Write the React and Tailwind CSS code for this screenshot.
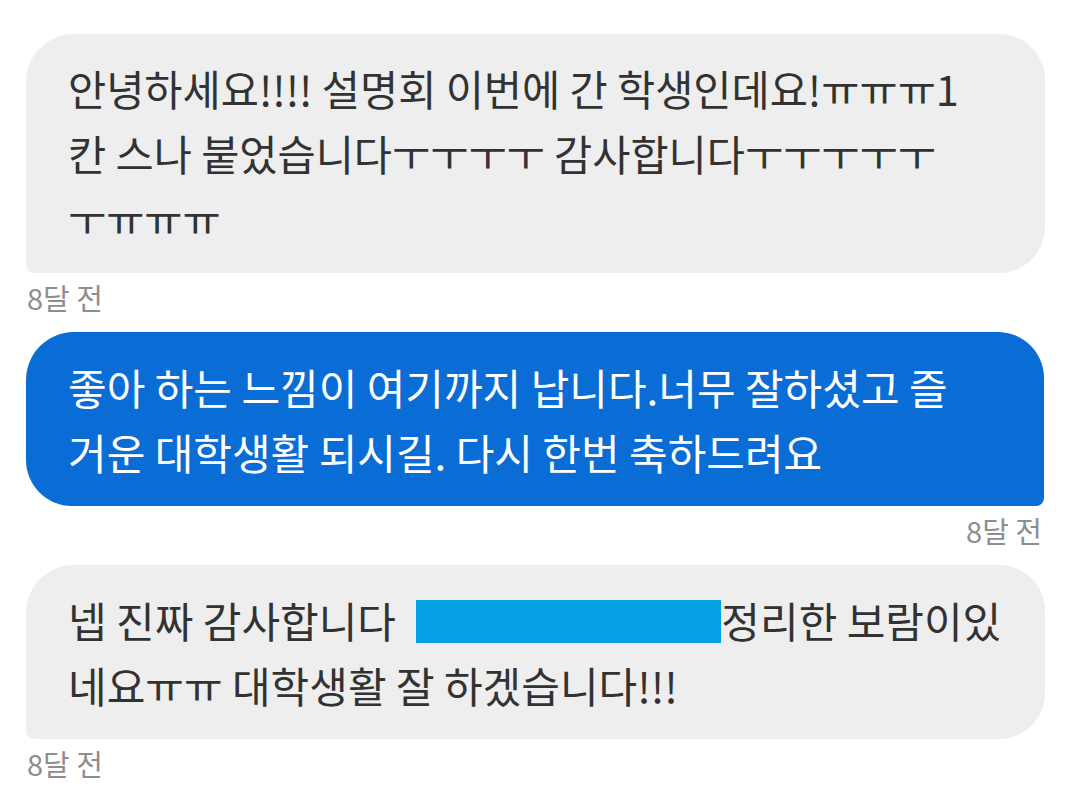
import React from 'react';

const font = { fontFamily: '"Noto Sans CJK KR", "Noto Sans", sans-serif' };

const Stamp = ({ right }) => (
    <div className={`mt-[6px] mb-[17px] h-[36px] leading-[36px] text-[29px] text-[#8e8e8e] ${right ? 'text-right pr-[32px]' : 'pl-[27px]'}`}>
        8달 전
    </div>
);

const App = () => {
    return (
        <div className="w-[1074px] h-[803px] bg-white overflow-hidden pt-[34px]" style={font}>
            {/* received */}
            <div className="mx-[26px] mr-[29px] bg-[#eeeeee] rounded-tl-[48px] rounded-tr-[46px] rounded-br-[46px] rounded-bl-[8px] pl-[42px] py-[22px] text-[41.5px] leading-[65px] text-[#323232]">
                <div className="whitespace-nowrap">안녕하세요!!!! 설명회 이번에 간 학생인데요!ㅠㅠㅠ1</div>
                <div className="whitespace-nowrap">칸 스나 붙었습니다ㅜㅜㅜㅜ 감사합니다ㅜㅜㅜㅜㅜ</div>
                <div className="whitespace-nowrap">ㅜㅠㅠㅠ</div>
            </div>
            <Stamp />

            {/* sent */}
            <div className="mx-[26px] mr-[30px] bg-[#0a6dd6] rounded-tl-[48px] rounded-tr-[46px] rounded-bl-[46px] rounded-br-[8px] pl-[42px] py-[22px] text-[42px] leading-[65px] text-white">
                <div className="whitespace-nowrap">좋아 하는 느낌이 여기까지 납니다.너무 잘하셨고 즐</div>
                <div className="whitespace-nowrap">거운 대학생활 되시길. 다시 한번 축하드려요</div>
            </div>
            <Stamp right />

            {/* received */}
            <div className="mx-[26px] mr-[29px] bg-[#eeeeee] rounded-tl-[48px] rounded-tr-[46px] rounded-br-[46px] rounded-bl-[8px] pl-[42px] py-[22px] text-[42px] leading-[65px] text-[#323232]">
                <div className="whitespace-nowrap">
                    넵 진짜 감사합니다 <span className="inline-block ml-[11px] w-[305px] h-[43px] bg-[#03a1e3] align-[-5px]"></span>정리한 보람이있
                </div>
                <div className="whitespace-nowrap">네요ㅠㅠ 대학생활 잘 하겠습니다!!!</div>
            </div>
            <Stamp />
        </div>
    );
};

export default App;
